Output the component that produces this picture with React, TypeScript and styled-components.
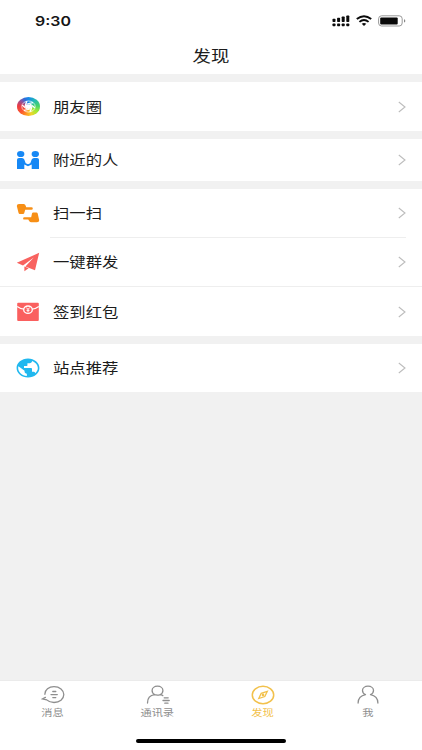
import React from 'react';
import styled, { createGlobalStyle } from 'styled-components';

const GlobalStyle = createGlobalStyle`
  * { box-sizing: border-box; }
  body { margin: 0; background: #f1f1f1; }
`;

const Screen = styled.div`
  width: 422px;
  height: 750px;
  display: flex;
  flex-direction: column;
  overflow: hidden;
  background: #f1f1f1;
  color: #1c1c1c;
  font-family: 'Noto Sans CJK SC', sans-serif;
`;

const Header = styled.header`
  height: 74px;
  background: #fff;
`;

const StatusBar = styled.div`
  height: 41px;
  display: flex;
  align-items: center;
  justify-content: space-between;
  padding: 0 16px 0 35px;
`;

const Clock = styled.span`
  font: 600 13.5px/20px Inter, sans-serif;
  transform: scaleX(1.18);
  transform-origin: left center;
  color: #151515;
`;

const StatusIcons = styled.div`
  display: flex;
  align-items: center;
  gap: 6px;
`;

const Title = styled.h1`
  margin: 0;
  height: 28px;
  font-size: 15.6px;
  line-height: 28px;
  font-weight: 400;
  text-align: center;
  transform: scaleX(1.18);
`;

const Group = styled.section`
  margin-top: 8px;
  background: #fff;
`;

const Row = styled.div<{ $height: number }>`
  height: ${(p) => p.$height}px;
  display: flex;
  align-items: center;
  padding: 0 16px;
`;

const IconSlot = styled.span`
  width: 24px;
  height: 22px;
  margin-right: 13px;
  flex: none;
  display: flex;
  align-items: center;
  justify-content: center;
`;

const Label = styled.span`
  flex: 1;
  font-size: 14.1px;
  line-height: 22px;
  padding-bottom: 2px;
  transform: scaleX(1.16);
  transform-origin: left center;
`;

const Divider = styled.div<{ $inset?: boolean }>`
  height: 1px;
  margin: ${(p) => (p.$inset ? '0 16px 0 50px' : '0')};
  background: #eeeeee;
`;

const ColorWheel = styled.span`
  width: 23px;
  height: 19px;
  border-radius: 50%;
  display: flex;
  background: conic-gradient(
    #1689e8 0deg, #23b8b5 45deg, #45d26b 85deg, #a2ea35 120deg,
    #f0d52b 160deg, #ff9a20 195deg, #fa5430 235deg, #ea3b45 275deg,
    #8055a8 310deg, #2a70dc 335deg, #1689e8 360deg
  );
`;

const TabBar = styled.nav`
  height: 70px;
  margin-top: auto;
  background: #fff;
  border-top: 1px solid #ebebeb;
  display: flex;
  flex-direction: column;
  align-items: center;
`;

const Tabs = styled.div`
  width: 100%;
  height: 58px;
  display: grid;
  grid-template-columns: repeat(4, 105px);
`;

const Tab = styled.div<{ $active?: boolean }>`
  display: flex;
  flex-direction: column;
  align-items: center;
  padding-top: 4px;
  color: ${(p) => (p.$active ? '#f2c14c' : '#8e8e8e')};
`;

const TabLabel = styled.span`
  font-size: 9.5px;
  line-height: 14px;
  transform: scaleX(1.18);
`;

const HomeIndicator = styled.div`
  width: 150px;
  height: 4px;
  border-radius: 2px;
  background: #000;
`;

const Signal = () => (
  <svg width="18" height="12" viewBox="0 0 18 12" fill="#0b0b0b">
    {[0, 1, 2, 3].map((i) => (
      <g key={i}>
        <rect x={0.5 + i * 4.6} y={3.8 - i * 1.1} width="3" height={3.2 + i * 1.1} rx="0.7" />
        <rect x={0.5 + i * 4.6} y="8.5" width="3" height="2.7" rx="0.7" />
      </g>
    ))}
  </svg>
);

const Wifi = () => (
  <svg width="16" height="11" viewBox="0 0 16 11" fill="none" stroke="#0b0b0b" strokeWidth="1.9">
    <path d="M.8 4.1Q8-1.8 15.2 4.1" />
    <path d="M3.4 6.9Q8 3 12.6 6.9" />
    <path d="M5.7 8.8Q8 7 10.3 8.8L8 10.9Z" fill="#0b0b0b" stroke="none" />
  </svg>
);

const Battery = () => (
  <svg width="28" height="12" viewBox="0 0 28 12">
    <rect x=".6" y=".8" width="23.6" height="10.2" rx="3" fill="none" stroke="#999" strokeWidth="1" />
    <rect x="2.2" y="2.5" width="17.5" height="6.9" rx="1" fill="#080808" />
    <path d="M26 4.2q1.3.4 1.3 1.7T26 7.6Z" fill="#888" />
  </svg>
);

const MomentsIcon = () => (
  <ColorWheel>
    <svg width="23" height="19" viewBox="0 0 24 24" preserveAspectRatio="none" fill="none" stroke="#fff">
      <circle cx="12" cy="12" r="7" strokeWidth="1" strokeOpacity=".75" />
      {[0, 60, 120, 180, 240, 300].map((a) => (
        <path key={a} d="M9.800 9.200Q13.500 7.800 16.800 7.200" strokeWidth="1.500" transform={`rotate(${a} 12 12)`} />
      ))}
      <circle cx="12" cy="12" r="3" fill="#fff" stroke="none" />
    </svg>
  </ColorWheel>
);

const NearbyIcon = () => (
  <svg width="24" height="20" viewBox="0 0 24 20" fill="#1688f5">
    <ellipse cx="4.700" cy="4" rx="3.700" ry="3.100" />
    <ellipse cx="19.300" cy="4" rx="3.700" ry="3.100" />
    <path d="M1 9.700Q1 8 3 8h3q1.700 0 2.300 1.600l1.400 3.600 2.300 1 2.300-1 1.400-3.600Q16.300 8 18 8h3q2 0 2 1.700V19h-7.300v-4.500L12 16.200 8.300 14.500V19H1Z" />
  </svg>
);

const ScanIcon = () => (
  <svg width="24" height="20" viewBox="0 0 24 20" fill="#f78f16">
    <path d="M.8 3Q.8 1 3 1h4.800q1.400 0 1.900 1.700l.5 1.600h5.300q1.300 0 1.300 1.200t-1.300 1.200H9.200L8.200 10.200Q8 11 7 11H3.800Q2.800 11 2.500 9.800Z" />
    <path d="M23.200 17.300q0 2-2.200 2h-5.500q-1.700 0-2.500-1.500l-.7-1.200H8.400q-1.300 0-1.300-1.200t1.300-1.200h6.800l.8-3.700Q16.200 9.500 17.200 9.500h3.200q1 0 1.300 1Z" />
  </svg>
);

const PlaneIcon = () => (
  <svg width="24" height="20" viewBox="0 0 24 20" fill="#f8625f">
    <path d="M23.200.8L.8 10.800 7 13.400 17.800 5.500 9.400 14.400 19 18.200Z" />
    <path d="M8.400 14.600V19.200L12.600 16.200Z" />
  </svg>
);

const EnvelopeIcon = () => (
  <svg width="24" height="20" viewBox="0 0 24 20">
    <rect x="1.200" y=".8" width="21.600" height="18.200" rx="1" fill="#fa605f" />
    <path d="M1.200 4.500Q5 7.200 8 7.200M22.800 4.500Q19 7.200 16 7.200" fill="none" stroke="#fff" strokeWidth="1.200" />
    <ellipse cx="12" cy="7.700" rx="4.300" ry="3.700" fill="#fa605f" stroke="#fff" strokeWidth="1.300" />
    <path d="M10.300 5.500L12 7.500l1.700-2M12 7.500V10.200M10.500 8.300h3" fill="none" stroke="#fff" strokeWidth="1" />
  </svg>
);

const GlobeIcon = () => (
  <svg width="24" height="20" viewBox="1.500 1.500 21 21" preserveAspectRatio="none" fill="#20b8ef">
    <path d="M12 2C6.480 2 2 6.480 2 12s4.480 10 10 10 10-4.480 10-10S17.520 2 12 2zm-1 18.500C6.900 20.100 3.400 16.450 3.400 12c0-.62.080-1.210.210-1.790L9 15v1c0 1.100.9 2 2 2v2.500zm7.400-3.100c-.26-.81-1-1.390-1.900-1.390h-1v-3c0-.55-.45-1-1-1h-6v-2h2c.55 0 1-.45 1-1V7h2c1.100 0 2-.9 2-2v-.41c2.930 1.190 5.100 4.060 5.100 7.410 0 2.080-.9 3.970-2.200 5.400z" />
  </svg>
);

const Chevron = () => (
  <svg width="8" height="12" viewBox="0 0 8 12" fill="none" stroke="#bdbdbd" strokeWidth="1.100">
    <path d="M.8 1L7 6 .8 11" />
  </svg>
);

const lineIcon = {
  height: 20,
  fill: 'none',
  stroke: 'currentColor',
  strokeWidth: 1.3,
  strokeLinecap: 'round' as const,
};

const MessageIcon = () => (
  <svg {...lineIcon} width="24" viewBox="0 0 24 20">
    <path d="M3.900 9.300C3.700 4.800 8 1.600 13 1.600c5.600 0 9.800 3.500 9.800 8s-4.200 7.900-9.800 7.900c-2.900 0-5.500-.9-7.300-2.600L1.700 13.900l2.700-1.500" />
    <path d="M11.800 6.500h3M10 9.600h6.300M11.800 12.600h3" />
  </svg>
);

const ContactsIcon = () => (
  <svg {...lineIcon} width="24" viewBox="0 0 24 20">
    <path d="M8.700 9.500C6.700 8.600 6.100 7 6.100 5.500c0-2.500 2.300-4.300 5.400-4.300s5.400 1.800 5.400 4.300c0 1.500-.7 3.100-2.600 4M8.700 9.700C4.200 10.200 1.500 13 1.500 18M8.700 9.700c1.700.6 4 .5 5.600-.1 1 .1 1.800.5 2.500 1" />
    <path d="M18.200 12.800h4M17 15.500h6.200M18.800 18.200H22" />
  </svg>
);

const DiscoverIcon = () => (
  <svg {...lineIcon} width="24" viewBox="0 0 24 20">
    <ellipse cx="12" cy="10" rx="10.700" ry="8.700" strokeWidth="1.500" />
    <path d="M16.300 6.400L10.200 8.300 7.800 13.500 13.800 11.500Z" />
    <circle cx="12" cy="9.900" r=".7" />
  </svg>
);

const MeIcon = () => (
  <svg {...lineIcon} width="24" viewBox="0 0 24 20">
    <path d="M9.500 9.600C7.300 8.700 6.500 7.200 6.500 5.500c0-2.500 2.400-4.300 5.500-4.300s5.500 1.800 5.500 4.300c0 1.700-.8 3.200-3 4.100M9.500 9.700C5 10.600 2.200 13.400 2.100 18M14.500 9.700c4.500.9 7.300 3.700 7.400 8.300" />
  </svg>
);

type ItemProps = { icon: React.ReactNode; label: string; height: number };

const Item = ({ icon, label, height }: ItemProps) => (
  <Row $height={height}>
    <IconSlot>{icon}</IconSlot>
    <Label>{label}</Label>
    <Chevron />
  </Row>
);

const tabs = [
  { label: '消息', icon: <MessageIcon /> },
  { label: '通讯录', icon: <ContactsIcon /> },
  { label: '发现', icon: <DiscoverIcon />, active: true },
  { label: '我', icon: <MeIcon /> },
];

export default function App() {
  return (
    <Screen>
      <GlobalStyle />
      <Header>
        <StatusBar>
          <Clock>9:30</Clock>
          <StatusIcons>
            <Signal />
            <Wifi />
            <Battery />
          </StatusIcons>
        </StatusBar>
        <Title>发现</Title>
      </Header>
      <Group>
        <Item icon={<MomentsIcon />} label="朋友圈" height={49} />
      </Group>
      <Group>
        <Item icon={<NearbyIcon />} label="附近的人" height={42} />
      </Group>
      <Group>
        <Item icon={<ScanIcon />} label="扫一扫" height={48} />
        <Divider $inset />
        <Item icon={<PlaneIcon />} label="一键群发" height={48} />
        <Divider />
        <Item icon={<EnvelopeIcon />} label="签到红包" height={49} />
      </Group>
      <Group>
        <Item icon={<GlobeIcon />} label="站点推荐" height={48} />
      </Group>
      <TabBar>
        <Tabs>
          {tabs.map((t) => (
            <Tab key={t.label} $active={t.active}>
              {t.icon}
              <TabLabel>{t.label}</TabLabel>
            </Tab>
          ))}
        </Tabs>
        <HomeIndicator />
      </TabBar>
    </Screen>
  );
}
